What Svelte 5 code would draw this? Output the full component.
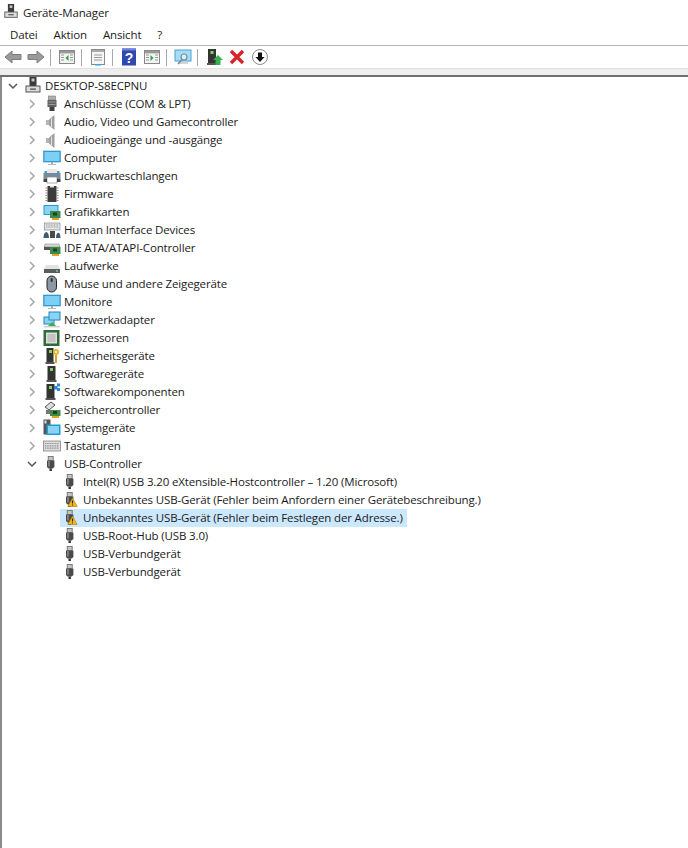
<script>
  const top = [
    ['Anschlüsse (COM & LPT)','port'],['Audio, Video und Gamecontroller','audio'],['Audioeingänge und -ausgänge','audio'],
    ['Computer','monitor'],['Druckwarteschlangen','printer'],['Firmware','chip'],['Grafikkarten','gpu'],
    ['Human Interface Devices','hid'],['IDE ATA/ATAPI-Controller','ide'],['Laufwerke','drive'],
    ['Mäuse und andere Zeigegeräte','mouse'],['Monitore','monitor'],['Netzwerkadapter','net'],['Prozessoren','cpu'],
    ['Sicherheitsgeräte','secure'],['Softwaregeräte','soft'],['Softwarekomponenten','softc'],['Speichercontroller','storage'],
    ['Systemgeräte','system'],['Tastaturen','keyboard']
  ];
  const usb = [
    ['Intel(R) USB 3.20 eXtensible-Hostcontroller – 1.20 (Microsoft)','usb'],
    ['Unbekanntes USB-Gerät (Fehler beim Anfordern einer Gerätebeschreibung.)','warn'],
    ['Unbekanntes USB-Gerät (Fehler beim Festlegen der Adresse.)','warn',true],
    ['USB-Root-Hub (USB 3.0)','usb'],['USB-Verbundgerät','usb'],['USB-Verbundgerät','usb']
  ];
  const menu = ['Datei','Aktion','Ansicht','?'];
</script>

{#snippet chev(open)}
  <svg class="chev" viewBox="0 0 10 10" width="10" height="10">
    {#if open}<path d="M1 3 L5 7 L9 3" fill="none" stroke="#555" stroke-width="1.5"/>
    {:else}<path d="M3 1 L7 5 L3 9" fill="none" stroke="#a6a6a6" stroke-width="1.5"/>{/if}
  </svg>
{/snippet}

{#snippet tower()}
  <rect x="5.5" y="0" width="7" height="10" fill="#3a3a3a"/><rect x="7.5" y="1.5" width="3" height="3" fill="#c4c4c4"/>
  <rect x="2" y="9" width="14" height="6" fill="#dcdcdc" stroke="#555"/>
  <rect x="6" y="11.5" width="6" height="1.2" fill="#444"/>
{/snippet}

{#snippet icon(n)}
  <svg class="ico" viewBox="0 0 18 18" width="18" height="18">
    {#if n==='pc'}{@render tower()}
    {:else if n==='port'}
      <rect x="5.5" y="1" width="7" height="4" fill="#b0b0b0" stroke="#777" stroke-width=".6"/><rect x="4.5" y="5" width="9" height="7" fill="#5f5f5f"/><rect x="5.5" y="6.5" width="7" height="1" fill="#9a9a9a"/><rect x="5.5" y="9" width="7" height="1" fill="#9a9a9a"/><path d="M6.5 12h5v4h-5z" fill="#3e3e3e"/>
    {:else if n==='audio'}
      <path d="M3 7h3v5H3z" fill="#b5b5b5"/><path d="M6 6.5 L11.5 2 V17 L6 12.5Z" fill="#a0a0a0"/><path d="M8.5 5.5 V14" stroke="#e2e2e2" stroke-width="1"/>
    {:else if n==='monitor'}
      <rect x="0.5" y="2" width="17" height="11" fill="#1f9bd8" stroke="#4f98c2" stroke-width=".7"/><rect x="1.5" y="3" width="15" height="9" fill="#7dd0f5"/><rect x="8" y="13" width="2" height="2" fill="#aaa"/><rect x="5" y="15" width="8" height="1" fill="#bbb"/>
    {:else if n==='printer'}
      <rect x="0.5" y="6" width="17" height="6" fill="#7a8a99"/><rect x="1.5" y="4" width="15" height="2.2" fill="#33a0d0"/><rect x="4" y="2" width="10" height="4" fill="#e8e8e8"/><rect x="4" y="10" width="10" height="6" fill="#fff" stroke="#888" stroke-width=".7"/><rect x="0.5" y="12" width="3.5" height="3" fill="#444"/><rect x="14" y="12" width="3.5" height="3" fill="#444"/>
    {:else if n==='chip'}
      <rect x="4.5" y="1" width="9" height="16" fill="#3b3b3b"/><rect x="7" y="1" width="4" height="1.5" fill="#ddd"/><path d="M2.5 3h2M2.5 5.5h2M2.5 8h2M2.5 10.5h2M2.5 13h2M2.5 15.5h2M13.5 3h2M13.5 5.5h2M13.5 8h2M13.5 10.5h2M13.5 13h2M13.5 15.5h2" stroke="#888" stroke-width="1"/>
    {:else if n==='gpu'}
      <rect x="0.5" y="2" width="15" height="10" fill="#1f9bd8"/><rect x="1.5" y="3" width="13" height="8" fill="#8ad3f3"/><rect x="7" y="8" width="10.5" height="7" fill="#3f8a4a"/><rect x="10" y="9.5" width="4" height="3" fill="#17451f"/><rect x="9" y="15" width="7" height="2" fill="#e0a52c"/>
    {:else if n==='hid'}
      <rect x="1.5" y="2" width="15.5" height="7" fill="#e5e5e5" stroke="#888" stroke-width=".7"/><path d="M3 4h12.5M3 6h12.5" stroke="#999" stroke-dasharray="1 .6"/><path d="M0.5 17 C0.5 9 6 9 6 17Z" fill="#3e5a74"/><rect x="7" y="10" width="5" height="7" fill="#4a4a4a"/><path d="M13 17 C13 10 17.5 10 17.5 17Z" fill="#3e5a74"/>
    {:else if n==='ide'}
      <path d="M2 5h14l1 3H1z" fill="#d7d7d7" stroke="#777" stroke-width=".5"/><rect x="1" y="8" width="9" height="3" fill="#555"/><rect x="7" y="8" width="10.5" height="7" fill="#3f8a4a"/><rect x="10" y="9.5" width="4" height="3" fill="#17451f"/><rect x="9" y="15" width="7" height="2" fill="#e0a52c"/>
    {:else if n==='drive'}
      <path d="M3 8h12l2 4H1z" fill="#e2e2e2"/><rect x="1" y="12" width="16" height="4" fill="#5c5c5c"/><rect x="13" y="13.5" width="2" height="1" fill="#7f7"/>
    {:else if n==='mouse'}
      <rect x="4" y="1" width="9.5" height="16" rx="4.7" fill="#8c97a6" stroke="#222" stroke-width="1"/><rect x="7.7" y="3" width="2" height="4" rx="1" fill="#333"/>
    {:else if n==='net'}
      <rect x="1" y="6" width="10" height="7" fill="#8ad3f3" stroke="#1f86c0"/><rect x="6" y="1" width="11" height="8" fill="#8ad3f3" stroke="#1f86c0"/><rect x="1" y="15" width="16" height="1.4" fill="#ccc"/><path d="M9 11 L13 15 H5Z" fill="#3cad50"/>
    {:else if n==='cpu'}
      <rect x="0.5" y="1" width="16" height="16" fill="#2f6b3c"/><rect x="3" y="3.5" width="11" height="11" fill="#dedede"/><rect x="4.5" y="5" width="8" height="8" fill="#c4c4c4"/>
    {:else if n==='secure'}
      <rect x="3.5" y="1" width="7" height="14" fill="#333"/><rect x="6" y="3" width="3" height="3" fill="#7ed35a"/><rect x="2.5" y="15" width="9" height="2" fill="#555"/><circle cx="13" cy="5" r="3" fill="#e6b530"/><circle cx="13" cy="5" r="1" fill="#fff"/><rect x="12" y="8" width="2" height="8" fill="#d9a520"/>
    {:else if n==='soft'}
      <rect x="4.5" y="1" width="8" height="14" fill="#333"/><rect x="7" y="3" width="3" height="3" fill="#7ed35a"/><rect x="3.5" y="15" width="10" height="2" fill="#555"/>
    {:else if n==='softc'}
      <rect x="3.5" y="1" width="8" height="14" fill="#333"/><rect x="6" y="3" width="3" height="3" fill="#7ed35a"/><rect x="2.5" y="15" width="10" height="2" fill="#555"/><rect x="11" y="3" width="3.5" height="3.5" fill="#2b88d8"/><rect x="14" y="0.5" width="3" height="3" fill="#2b88d8"/><rect x="14" y="5" width="3" height="3" fill="#2b88d8"/>
    {:else if n==='storage'}
      <path d="M2 6 L8 1 L12 4 L6 9Z" fill="#ddd" stroke="#555"/><path d="M3 9h4v4H3z" fill="#777"/><rect x="7" y="9" width="10.5" height="6" fill="#3f8a4a"/><rect x="10" y="10" width="4" height="3" fill="#17451f"/><rect x="9" y="15" width="7" height="2" fill="#e0a52c"/>
    {:else if n==='system'}
      <rect x="0.5" y="0.5" width="7" height="15" fill="#555"/><rect x="1.5" y="1.5" width="2" height="3" fill="#ddd"/><rect x="3.5" y="5.5" width="14" height="10.5" fill="#1f9bd8"/><rect x="5" y="7" width="11" height="7.5" fill="#8ad3f3"/>
    {:else if n==='keyboard'}
      <rect x="0.5" y="4" width="17" height="10" fill="#dcdcdc" stroke="#777" stroke-width=".7"/><path d="M2 6.5h14M2 8.8h14M2 11.2h14" stroke="#8c8c8c" stroke-width="1.2" stroke-dasharray="1 .7"/>
    {:else if n==='usb'||n==='warn'}
      <rect x="5.2" y="1.5" width="5" height="4" fill="#c4c4c4" stroke="#666" stroke-width=".8"/><path d="M4 5.5h7.4v6.5l-1.6 1.5H5.6L4 12z" fill="#4a4a4a"/><rect x="5.2" y="6" width="1.6" height="5.5" fill="#8a8a8a"/><rect x="6.5" y="13.5" width="2.4" height="2.5" fill="#333"/>
      {#if n==='warn'}<path d="M10.5 7 L15.2 15.5 H5.8Z" fill="#f5b81c" stroke="#a9780f" stroke-width=".6"/><path d="M10.5 9.6v3M10.5 13.4v1.2" stroke="#222" stroke-width="1.1"/>{/if}
    {/if}
  </svg>
{/snippet}

{#snippet row(depth,label,ic,open,sel)}
  <div class="row d{depth}">
    {#if depth<2}{@render chev(open)}{/if}
    <div class="cell" class:sel>
      {@render icon(ic)}
      <span>{label}</span>
    </div>
  </div>
{/snippet}

<div class="win">
  <header class="title">
    <svg viewBox="0 0 18 18" width="16" height="16" class="ticon">{@render tower()}</svg>
    <span>Geräte-Manager</span>
  </header>
  <nav class="menu">{#each menu as m}<span>{m}</span>{/each}</nav>
  <div class="toolbar">
    <svg viewBox="0 0 18 18" width="18" height="18"><path d="M1 9 L8 3 V6.5 H17 V11.5 H8 V15Z" fill="#9a9a9a" stroke="#7d7d7d"/></svg>
    <svg class="g5" viewBox="0 0 18 18" width="18" height="18"><path d="M17 9 L10 3 V6.5 H1 V11.5 H10 V15Z" fill="#9a9a9a" stroke="#7d7d7d"/></svg>
    <i class="sep"></i>
    <svg viewBox="0 0 18 18" width="18" height="18"><rect x="1.5" y="2.5" width="15" height="13" fill="#f3f3f3" stroke="#888"/><rect x="2" y="3" width="14" height="2.4" fill="#999"/><path d="M3 7h3M3 9.5h3M3 12h3M12 7h3M12 9.5h3M12 12h3" stroke="#999"/><path d="M10.5 7 L7.5 10 L10.5 13Z" fill="#2f9e44"/></svg>
    <i class="sep"></i>
    <svg viewBox="0 0 18 18" width="18" height="18"><rect x="2.5" y="1.5" width="13" height="15" fill="#f6f6f6" stroke="#8a8a8a"/><rect x="3" y="2" width="12" height="2" fill="#aaa"/><path d="M5 7h8M5 9.5h8M5 12h8" stroke="#999"/><rect x="6" y="16" width="6" height="1.5" fill="#39a7d8"/></svg>
    <i class="sep"></i>
    <svg viewBox="0 0 18 18" width="18" height="18"><rect x="2" y="0.5" width="14" height="17" fill="#2f49b0"/><rect x="2" y="0.5" width="14" height="2" fill="#6d82d6"/><text x="9" y="14.5" text-anchor="middle" font-size="14" font-weight="700" fill="#fff" font-family="Liberation Sans, sans-serif">?</text></svg>
    <svg class="g5" viewBox="0 0 18 18" width="18" height="18"><rect x="1.5" y="2.5" width="15" height="13" fill="#f3f3f3" stroke="#888"/><rect x="2" y="3" width="14" height="2.4" fill="#999"/><path d="M3 7h3M3 9.5h3M3 12h3M12 7h3M12 9.5h3M12 12h3" stroke="#999"/><path d="M7.5 7 L10.5 10 L7.5 13Z" fill="#2f9e44"/></svg>
    <i class="sep"></i>
    <svg viewBox="0 0 18 18" width="18" height="18"><rect x="1" y="2" width="16" height="11" fill="#a6dcf5" stroke="#4ba3cf"/><rect x="4" y="14.5" width="10" height="1" fill="#aaa"/><circle cx="10" cy="9" r="3" fill="#d9eff9" stroke="#6d8ea0" stroke-width="1.2"/><path d="M8 11.5 L4 16" stroke="#6d8ea0" stroke-width="1.6"/></svg>
    <i class="sep"></i>
    <svg class="g1" viewBox="0 0 18 18" width="18" height="18"><rect x="2" y="1" width="8" height="14" fill="#333"/><rect x="4.5" y="3" width="3" height="3" fill="#7ed35a"/><rect x="1" y="15" width="10" height="2" fill="#555"/><path d="M12 7 L17 12 H14.5 V17 H9.5 V12 H7Z" fill="#36b04c"/></svg>
    <svg class="g4" viewBox="0 0 18 18" width="18" height="18"><path d="M3 3 L15 15 M15 3 L3 15" stroke="#d8232a" stroke-width="3.4"/></svg>
    <svg class="g5" viewBox="0 0 18 18" width="18" height="18"><circle cx="9" cy="9" r="7.5" fill="#fff" stroke="#8c8c8c"/><path d="M7 4.5h4V9h2.5L9 14 4.5 9H7z" fill="#111"/></svg>
  </div>
  <div class="band"></div>
  <main class="tree">
    {@render row(0,'DESKTOP-S8ECPNU','pc',true,false)}
    {#each top as [l,i]}{@render row(1,l,i,false,false)}{/each}
    {@render row(1,'USB-Controller','usb',true,false)}
    {#each usb as [l,i,s]}{@render row(2,l,i,false,!!s)}{/each}
  </main>
</div>

<style>
  :global(body){margin:0;background:#fff;}
  .win{width:688px;height:848px;display:flex;flex-direction:column;overflow:hidden;font-family:"Open Sans",sans-serif;font-size:11.5px;letter-spacing:-0.14px;color:#1a1a1a;}
  .title{height:24px;display:flex;align-items:center;padding-left:3px;gap:4px;flex:none;}
  .ticon{flex:none;}
  .menu{height:21px;display:flex;align-items:center;padding-left:10px;gap:16px;flex:none;border-bottom:1px solid #b5b5b5;}
  .toolbar{height:22px;display:flex;align-items:center;padding-left:4px;flex:none;}
  .toolbar svg{flex:none;}
  .sep{width:1px;height:17px;background:#a8a8a8;margin:0 7px 0 5px;flex:none;}
  .g5{margin-left:5px;}
  .g4{margin-left:4px;}
  .g1{margin-left:1px;}
  .band{height:6px;background:#eeeeee;border-top:1px solid #e0e0e0;border-bottom:2px solid #6e6e6e;flex:none;}
  .tree{flex:1;border-left:2px solid #8c8c8c;}
  .row{height:18px;display:flex;align-items:center;}
  .d0{padding-left:6px;}
  .d1{padding-left:25px;}
  .d2{padding-left:58px;}
  .chev{flex:none;margin-right:6px;}
  .cell{display:flex;align-items:center;height:18px;padding-right:4px;}
  .cell span{margin-left:3px;white-space:nowrap;position:relative;top:-1px;}
  .d2 .ico{margin-left:2px;}
  .sel{background:#cce8ff;}
  .ico{flex:none;}
</style>
